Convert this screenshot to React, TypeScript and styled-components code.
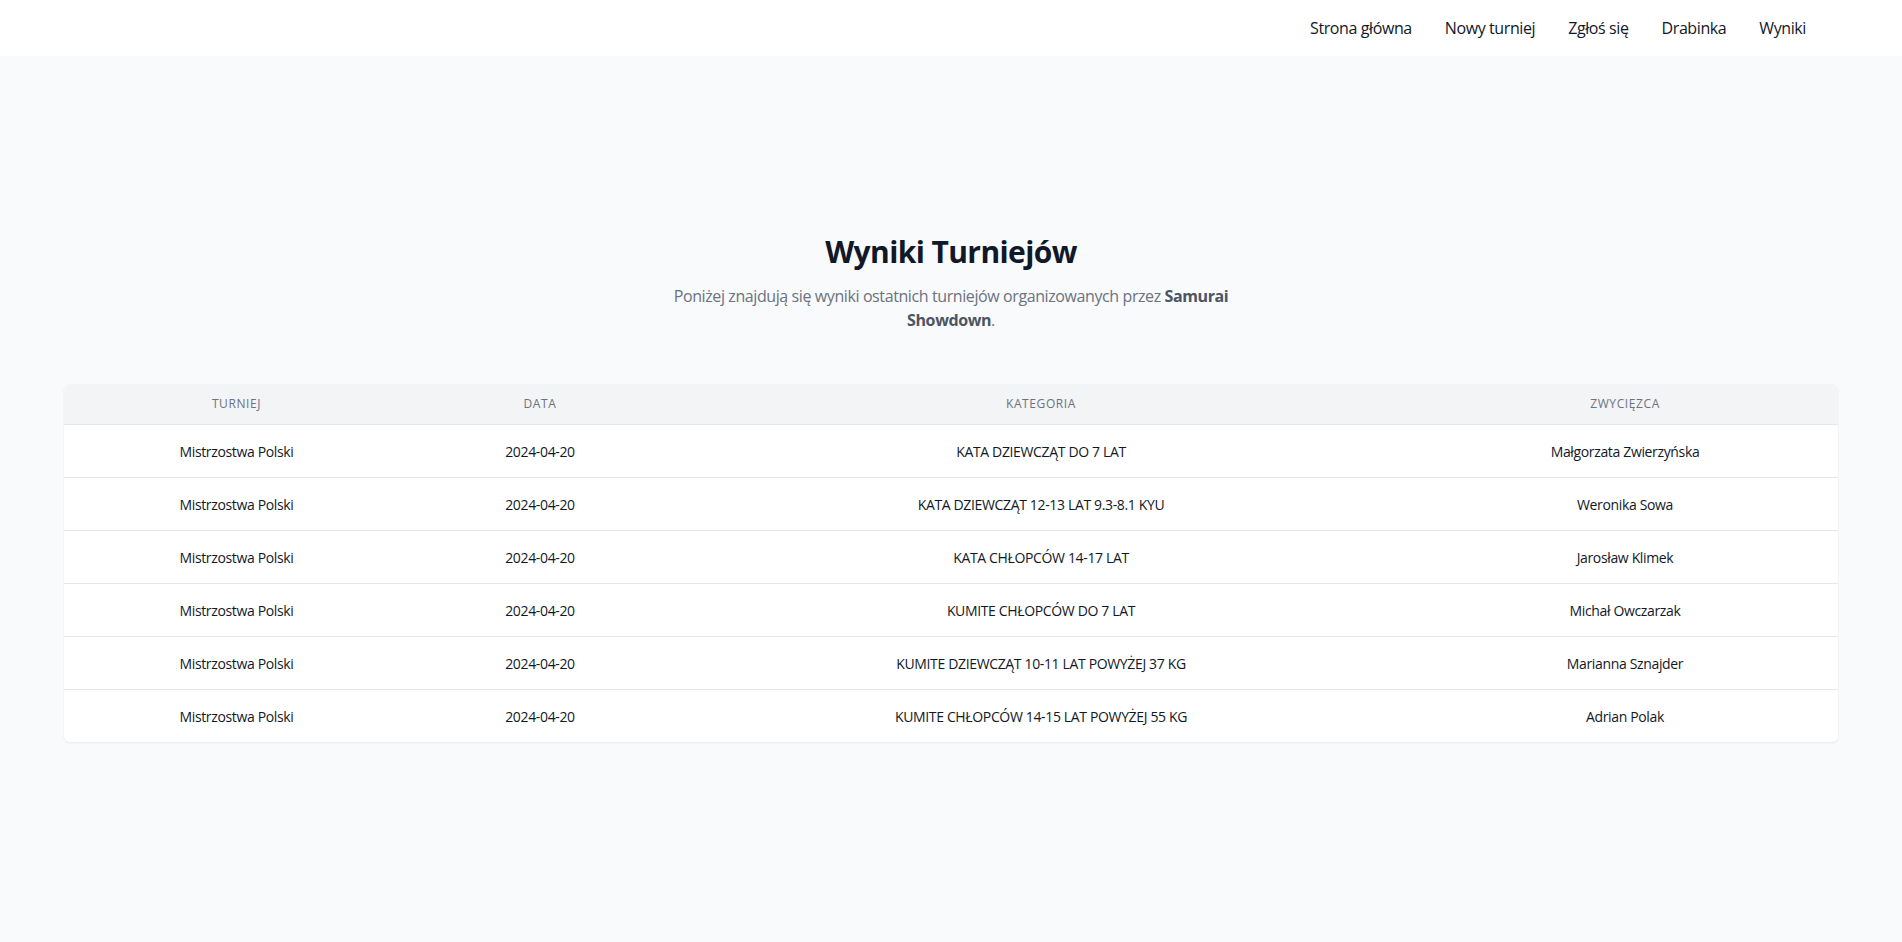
import React from "react";
import styled, { createGlobalStyle } from "styled-components";

const GlobalStyle = createGlobalStyle`
  html, body {
    margin: 0;
    padding: 0;
    background: #f9fafb;
    font-family: "Segoe UI", "Open Sans", "Noto Sans", sans-serif;
    color: #111827;
  }
  * { box-sizing: border-box; }
`;

const Page = styled.div`
  min-height: 942px;
  background: #f9fafb;
`;

const Header = styled.header`
  height: 56px;
  background: #ffffff;
  display: flex;
  align-items: center;
  justify-content: flex-end;
  padding-right: 96px;
`;

const Nav = styled.nav`
  display: flex;
  align-items: center;
  gap: 33px;
`;

const NavLink = styled.a`
  font-size: 16px;
  line-height: 24px;
  letter-spacing: -0.025em;
  color: #111827;
  text-decoration: none;
  cursor: pointer;
`;

const Main = styled.main`
  padding: 178px 64px 0;
  display: flex;
  flex-direction: column;
  align-items: center;
`;

const Title = styled.h1`
  margin: 0;
  font-size: 30px;
  line-height: 36px;
  font-weight: 700;
  letter-spacing: -0.02em;
  color: #111827;
`;

const Lead = styled.p`
  margin: 14px 0 0;
  max-width: 576px;
  text-align: center;
  font-size: 16px;
  line-height: 24px;
  letter-spacing: -0.025em;
  color: #6b7280;
`;

const Strong = styled.strong`
  font-weight: 700;
  color: #4b5563;
`;

const TableWrap = styled.div`
  margin-top: 52px;
  width: 100%;
  background: #ffffff;
  border-radius: 6px;
  overflow: hidden;
  box-shadow: 0 1px 3px rgba(0, 0, 0, 0.05), 0 1px 2px rgba(0, 0, 0, 0.03);
`;

const Table = styled.table`
  width: 100%;
  border-collapse: collapse;
  table-layout: fixed;
`;

const Col = styled.col<{ $w: number }>`
  width: ${(p) => p.$w}px;
`;

const HeadRow = styled.tr`
  background: #f3f4f6;
  border-bottom: 1px solid #e5e7eb;
`;

const Th = styled.th`
  padding: 12px 24px;
  font-size: 12px;
  line-height: 16px;
  font-weight: 500;
  color: #6b7280;
  text-transform: uppercase;
  letter-spacing: 0.05em;
  text-align: center;
`;

const Row = styled.tr<{ $last?: boolean }>`
  border-bottom: ${(p) => (p.$last ? "none" : "1px solid #e5e7eb")};
`;

const Td = styled.td`
  padding: 17px 24px 15px;
  font-size: 14px;
  line-height: 20px;
  letter-spacing: -0.025em;
  color: #111827;
  text-align: center;
  white-space: nowrap;
`;

const rows = [
  ["Mistrzostwa Polski", "2024-04-20", "KATA DZIEWCZĄT DO 7 LAT", "Małgorzata Zwierzyńska"],
  ["Mistrzostwa Polski", "2024-04-20", "KATA DZIEWCZĄT 12-13 LAT 9.3-8.1 KYU", "Weronika Sowa"],
  ["Mistrzostwa Polski", "2024-04-20", "KATA CHŁOPCÓW 14-17 LAT", "Jarosław Klimek"],
  ["Mistrzostwa Polski", "2024-04-20", "KUMITE CHŁOPCÓW DO 7 LAT", "Michał Owczarzak"],
  ["Mistrzostwa Polski", "2024-04-20", "KUMITE DZIEWCZĄT 10-11 LAT POWYŻEJ 37 KG", "Marianna Sznajder"],
  ["Mistrzostwa Polski", "2024-04-20", "KUMITE CHŁOPCÓW 14-15 LAT POWYŻEJ 55 KG", "Adrian Polak"],
];

const navItems = ["Strona główna", "Nowy turniej", "Zgłoś się", "Drabinka", "Wyniki"];

export default function App() {
  return (
    <Page>
      <GlobalStyle />
      <Header>
        <Nav>
          {navItems.map((n) => (
            <NavLink key={n}>{n}</NavLink>
          ))}
        </Nav>
      </Header>
      <Main>
        <Title>Wyniki Turniejów</Title>
        <Lead>
          Poniżej znajdują się wyniki ostatnich turniejów organizowanych przez{" "}
          <Strong>Samurai</Strong> <Strong>Showdown</Strong>.
        </Lead>
        <TableWrap>
          <Table>
            <colgroup>
              <Col $w={345} />
              <Col $w={262} />
              <Col $w={740} />
              <Col $w={428} />
            </colgroup>
            <thead>
              <HeadRow>
                <Th>Turniej</Th>
                <Th>Data</Th>
                <Th>Kategoria</Th>
                <Th>Zwycięzca</Th>
              </HeadRow>
            </thead>
            <tbody>
              {rows.map((r, i) => (
                <Row key={i} $last={i === rows.length - 1}>
                  {r.map((c, j) => (
                    <Td key={j}>{c}</Td>
                  ))}
                </Row>
              ))}
            </tbody>
          </Table>
        </TableWrap>
      </Main>
    </Page>
  );
}
